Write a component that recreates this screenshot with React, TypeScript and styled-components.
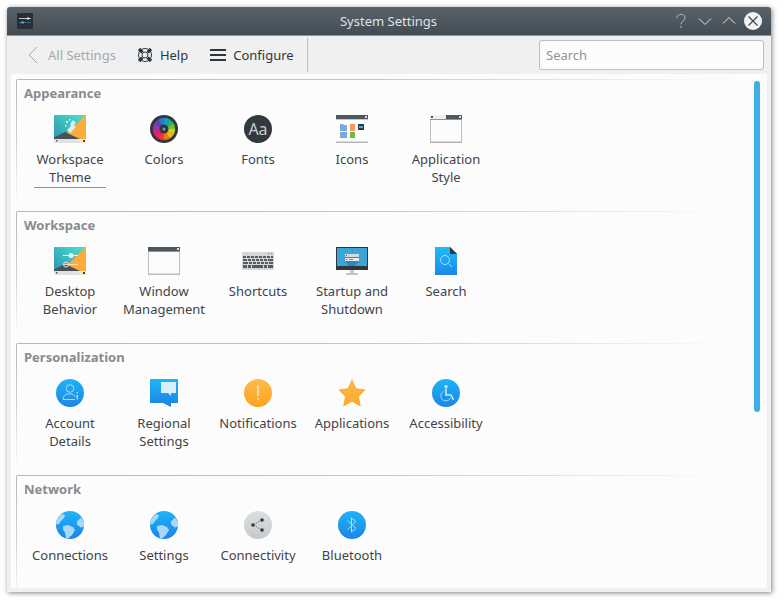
import { ReactNode } from 'react';
import styled, { createGlobalStyle } from 'styled-components';

const GlobalStyle = createGlobalStyle`
    html, body {
        margin: 0;
        padding: 0;
        background: #ffffff;
        font-family: "Noto Sans", "Liberation Sans", sans-serif;
        font-size: 13px;
    }
`;

const Page = styled.div`
    width: 784px;
    height: 605px;
    padding: 7px 13px 13px 7px;
    box-sizing: border-box;
    overflow: hidden;
`;

const Window = styled.div`
    height: 585px;
    display: flex;
    flex-direction: column;
    background: #eff0f1;
    border-radius: 3px 3px 0 0;
    box-shadow: 1px 1px 5px rgba(0, 0, 0, 0.5);
`;

const TitleBar = styled.div`
    height: 28px;
    flex: none;
    display: flex;
    align-items: center;
    padding: 0 9px 0 10px;
    background: linear-gradient(#59636b, #434c53);
    border-bottom: 1px solid #3daee9;
    border-radius: 3px 3px 0 0;
`;

const TitleSide = styled.div`
    flex: 1 1 0;
    display: flex;
    align-items: center;
`;

const Title = styled.div`
    flex: none;
    color: #dfe2e4;
    font-size: 13px;
    padding-right: 2px;
`;

const WindowButtons = styled(TitleSide)`
    justify-content: flex-end;
    gap: 6px;
`;

const Toolbar = styled.div`
    height: 38px;
    flex: none;
    display: flex;
    align-items: center;
    padding: 0 7px 0 0;
`;

const ToolButton = styled.div<{ $disabled?: boolean; $gap: number; $left: number }>`
    display: flex;
    align-items: center;
    gap: ${(p) => p.$gap}px;
    margin-left: ${(p) => p.$left}px;
    color: ${(p) => (p.$disabled ? '#a6a8aa' : '#31363b')};
`;

const ToolSeparator = styled.div`
    width: 1px;
    height: 34px;
    margin-left: 13px;
    background: #bcbec0;
`;

const SearchBox = styled.div`
    margin-left: auto;
    width: 225px;
    height: 30px;
    box-sizing: border-box;
    padding: 0 6px;
    display: flex;
    align-items: center;
    background: #fcfcfc;
    border: 1px solid #bcbec0;
    border-radius: 3px;
    color: #929496;
`;

const Content = styled.div`
    flex: 1;
    min-height: 0;
    margin: 0 4px 4px 4px;
    display: flex;
    background: #fcfcfc;
    overflow: hidden;
`;

const Groups = styled.div`
    flex: 1;
    padding: 5px 24px 0 5px;
`;

const Group = styled.section`
    height: 132px;
    padding: 6px 0 0 7px;
    box-sizing: border-box;
    background:
        linear-gradient(to right, #b4b6b8, #c4c6c8 50%, rgba(196, 198, 200, 0) 100%) top / 100% 1px no-repeat,
        linear-gradient(to bottom, #b4b6b8, #d0d2d4 50%, rgba(208, 210, 212, 0) 95%) left / 1px 100% no-repeat;
    border-top-left-radius: 2px;
`;

const GroupTitle = styled.h2`
    margin: 0 0 0 1px;
    height: 17px;
    line-height: 17px;
    font-size: 13px;
    font-weight: 700;
    color: #898b8d;
`;

const Items = styled.div`
    display: flex;
    margin-top: 11px;
`;

const Item = styled.div`
    width: 94px;
    display: flex;
    flex-direction: column;
    align-items: center;
`;

const IconBox = styled.div`
    width: 32px;
    height: 32px;
    margin-bottom: 5px;
    svg {
        display: block;
    }
`;

const Label = styled.div<{ $selected?: boolean }>`
    width: 72px;
    text-align: center;
    line-height: 18px;
    color: #3f4448;
    display: flex;
    justify-content: center;
    padding-bottom: 1px;
    border-bottom: 1px solid ${(p) => (p.$selected ? '#3daee9' : 'transparent')};
`;

const Scrollbar = styled.div`
    flex: none;
    width: 6px;
    height: 331px;
    margin: 7px 7px 0 0;
    background: #3daee9;
    border-radius: 3px;
`;

const Svg = ({ children }: { children: ReactNode }) => (
    <svg width="32" height="32" viewBox="0 0 32 32">
        {children}
    </svg>
);

const Wallpaper = ({ id, children }: { id: string; children: ReactNode }) => (
    <Svg>
        <defs>
            <linearGradient id={id} x1="0" y1="1" x2="1" y2="0">
                <stop offset="0" stopColor="#2b8fb3" />
                <stop offset="1" stopColor="#4fe3cb" />
            </linearGradient>
        </defs>
        <rect x="0" y="2" width="32" height="28" fill={`url(#${id})`} />
        <path d="M32 2V26H7z" fill="#fdab3a" />
        <path d="M0 26V24.500L11 19 26 26z" fill="#4a5257" />
        <rect x="0" y="26" width="32" height="4" fill="#dfe2e3" />
        <path d="M22 26h10v4h-4z" fill="#fbe8c8" />
        <rect x="2" y="27" width="1.400" height="1.400" fill="#444" />
        <rect x="29" y="27" width="2" height="2" fill="#444" />
        {children}
    </Svg>
);

const WorkspaceIcon = () => (
    <Wallpaper id="wp1">
        <path d="M19 7l3 3-2 2 2 2-6 6-3-3 4-4-1-2z" fill="#dfeef2" />
        <rect x="12" y="8" width="2" height="2" fill="#dfeef2" />
        <rect x="15" y="6" width="1.500" height="1.500" fill="#dfeef2" />
        <rect x="11" y="12" width="1.500" height="1.500" fill="#dfeef2" />
    </Wallpaper>
);

const DesktopIcon = () => (
    <Wallpaper id="wp2">
        <rect x="9" y="10" width="15" height="1" fill="#eef3f4" />
        <circle cx="17" cy="10.500" r="2.500" fill="#eef3f4" />
        <rect x="9" y="19" width="15" height="1" fill="#f8dfb8" />
        <circle cx="12" cy="19.500" r="2.500" fill="none" stroke="#dfe5e7" strokeWidth="1" />
    </Wallpaper>
);

const wheel = [
    '#18a0c8', '#22b07a', '#6cc02c', '#c8d020', '#f4b414', '#f47a18',
    '#f03c2c', '#e8245c', '#d0248c', '#9a34b0', '#5a44c0', '#2a78c8',
];

const wedge = (i: number) => {
    const a = ((i * 30 - 90) * Math.PI) / 180;
    const b = (((i + 1) * 30 - 90) * Math.PI) / 180;
    const p = (t: number) => `${(16 + 11 * Math.cos(t)).toFixed(2)} ${(16 + 11 * Math.sin(t)).toFixed(2)}`;
    return `M16 16L${p(a)}A11 11 0 0 1 ${p(b)}z`;
};

const ColorsIcon = () => (
    <Svg>
        <circle cx="16" cy="16" r="14" fill="#31363b" />
        {wheel.map((c, i) => (
            <path key={c} d={wedge(i)} fill={c} stroke={c} strokeWidth="0.3" />
        ))}
        <circle cx="16" cy="16" r="4.500" fill="#31363b" />
        <circle cx="16" cy="16" r="1.500" fill="#8a8f94" />
    </Svg>
);

const FontsIcon = () => (
    <Svg>
        <circle cx="16" cy="16" r="14" fill="#33383d" />
        <text x="16" y="21.500" textAnchor="middle" fontFamily="Noto Sans" fontSize="16" fill="#c9ccce">
            Aa
        </text>
    </Svg>
);

const IconsIcon = () => (
    <Svg>
        <rect x="0" y="2" width="32" height="28" fill="#fcfcfc" />
        <rect x="0" y="2" width="32" height="4" fill="#4d575f" />
        <rect x="29" y="3" width="2" height="2" fill="#dfe2e3" />
        <rect x="0" y="6" width="32" height="1" fill="#9fd3ef" />
        <rect x="0" y="28.500" width="32" height="1.500" fill="#b4b9bd" />
        <path d="M4 11h3l1 1h3v6H4z" fill="#7ba9dc" />
        <path d="M4 19h7v6H4z" fill="#7ba9dc" />
        <path d="M14 11h5v7h-5z" fill="#f59a5a" />
        <path d="M14 19h5v6h-5z" fill="#74b83c" />
        <rect x="22" y="11" width="6" height="6" fill="#31363b" />
        <rect x="23" y="13" width="4" height="2" fill="#3daee9" />
    </Svg>
);

const StyleIcon = () => (
    <Svg>
        <rect x="0" y="2" width="32" height="28" fill="#fcfcfc" />
        <rect x="0" y="2" width="32" height="4" fill="#eceef0" />
        <rect x="16" y="2" width="16" height="4" fill="#4d575f" />
        <rect x="1" y="3" width="2" height="2" fill="#4d575f" />
        <rect x="29" y="3" width="2" height="2" fill="#dfe2e3" />
        <rect x="0" y="6" width="32" height="1" fill="#3daee9" />
        <path d="M0 7h1v22H0zM31 7h1v22h-1z" fill="#bcc0c4" />
        <rect x="0" y="28.500" width="32" height="1.500" fill="#aeb3b8" />
    </Svg>
);

const WindowIcon = () => (
    <Svg>
        <rect x="0" y="2" width="32" height="28" fill="#fcfcfc" />
        <rect x="0" y="2" width="32" height="4" fill="#4d575f" />
        <rect x="29" y="3" width="2" height="2" fill="#dfe2e3" />
        <rect x="0" y="6" width="32" height="1" fill="#3daee9" />
        <path d="M0 7h1v22H0zM31 7h1v22h-1z" fill="#bcc0c4" />
        <rect x="0" y="28.500" width="32" height="1.500" fill="#b8bcc0" />
    </Svg>
);

const KeyboardIcon = () => (
    <Svg>
        <rect x="0" y="7" width="32" height="18" rx="1" fill="#d3d7d8" />
        <rect x="26" y="8" width="1.200" height="1.200" fill="#2fbf8f" />
        <rect x="29" y="8" width="1.200" height="1.200" fill="#2fbf8f" />
        <path
            d="M1 11h3v2H1zM5 11h3v2H5zM9 11h3v2H9zM13 11h3v2h-3zM17 11h3v2h-3zM21 11h3v2h-3zM25 11h3v2h-3zM29 11h2v2h-2zM1 14h4v2H1zM6 14h3v2H6zM10 14h3v2h-3zM14 14h3v2h-3zM18 14h3v2h-3zM22 14h3v2h-3zM26 14h5v2h-5zM1 17h5v2H1zM7 17h3v2H7zM11 17h3v2h-3zM15 17h3v2h-3zM19 17h3v2h-3zM23 17h3v2h-3zM27 17h4v2h-4zM1 20h4v3H1zM6 20h3v3H6zM10 20h11v3H10zM22 20h3v3h-3zM26 20h5v3h-5z"
            fill="#555c61"
        />
    </Svg>
);

const MonitorIcon = () => (
    <Svg>
        <rect x="0" y="2" width="32" height="23" fill="#31363b" />
        <rect x="1" y="3" width="30" height="18" fill="#3ba4d9" />
        <path d="M9 9h14v8l-5 4H13L9 16z" fill="#2f87b5" />
        <rect x="9" y="9" width="14" height="3" fill="#d5dadd" />
        <rect x="9" y="13" width="14" height="3" fill="#e8ebed" />
        <rect x="10" y="10" width="1" height="1" fill="#555" />
        <rect x="10" y="14" width="1" height="1" fill="#555" />
        <rect x="13" y="14" width="4" height="1" fill="#888" />
        <rect x="14" y="25" width="4" height="3" fill="#c6cacd" />
        <rect x="10" y="28" width="12" height="2" fill="#c0c4c7" />
    </Svg>
);

const SearchDocIcon = () => (
    <Svg>
        <defs>
            <linearGradient id="doc" x1="0" y1="0" x2="0" y2="1">
                <stop offset="0" stopColor="#1dbcf8" />
                <stop offset="1" stopColor="#1d88e8" />
            </linearGradient>
        </defs>
        <path d="M5 2h15l7 7v21H5z" fill="url(#doc)" />
        <path d="M20 2l7 7h-7z" fill="#31363b" />
        <circle cx="15" cy="15" r="4.500" fill="none" stroke="#a8def8" strokeWidth="1" />
        <path d="M18.500 18.500L22 22" stroke="#a8def8" strokeWidth="1" />
    </Svg>
);

const BlueDisc = ({ id, children }: { id: string; children?: ReactNode }) => (
    <Svg>
        <defs>
            <linearGradient id={id} x1="0" y1="0" x2="0" y2="1">
                <stop offset="0" stopColor="#1fb4f5" />
                <stop offset="1" stopColor="#1d84e6" />
            </linearGradient>
        </defs>
        <circle cx="16" cy="16" r="14" fill={`url(#${id})`} />
        {children}
    </Svg>
);

const AccountIcon = () => (
    <BlueDisc id="acc">
        <circle cx="16" cy="11.500" r="3.800" fill="none" stroke="#a9dcf8" strokeWidth="1" />
        <path d="M9 22.500c0-3.500 2-5 4.500-5.500h4c2 .5 3 1.500 3.500 3M9 22.500h12" fill="none" stroke="#a9dcf8" strokeWidth="1" />
        <rect x="22.500" y="18" width="1.500" height="4.500" fill="#a9dcf8" />
        <rect x="22.500" y="15" width="1.500" height="1.500" fill="#a9dcf8" />
    </BlueDisc>
);

const RegionalIcon = () => (
    <Svg>
        <defs>
            <linearGradient id="reg" x1="0" y1="0" x2="0" y2="1">
                <stop offset="0" stopColor="#1fb6f6" />
                <stop offset="1" stopColor="#1d80e4" />
            </linearGradient>
        </defs>
        <path d="M2 2h28v24h-7v4l-8-4H2z" fill="url(#reg)" />
        <path d="M13 5h15v11h-5v3l-3-3h-7z" fill="#d8eefb" />
    </Svg>
);

const NotificationIcon = () => (
    <Svg>
        <defs>
            <linearGradient id="not" x1="0" y1="0" x2="0" y2="1">
                <stop offset="0" stopColor="#fdbc4b" />
                <stop offset="1" stopColor="#fca21f" />
            </linearGradient>
        </defs>
        <circle cx="16" cy="16" r="14" fill="url(#not)" />
        <rect x="15.300" y="8" width="1.500" height="11" fill="#fde6bf" />
        <rect x="15.300" y="21" width="1.500" height="2" fill="#fde6bf" />
    </Svg>
);

const StarIcon = () => (
    <Svg>
        <defs>
            <linearGradient id="star" x1="0" y1="0" x2="0" y2="1">
                <stop offset="0" stopColor="#fdbc4b" />
                <stop offset="1" stopColor="#fca628" />
            </linearGradient>
        </defs>
        <path d="M16 2l4.400 9.200 9.600 1.300-7 6.900 1.700 10.200L16 24.800l-8.700 4.800L9 19.400l-7-6.900 9.600-1.300z" fill="url(#star)" />
    </Svg>
);

const AccessibilityIcon = () => (
    <BlueDisc id="axs">
        <circle cx="16" cy="9.500" r="1.600" fill="#d5effc" />
        <path d="M16 11.500v6.500h5l2.500 5" fill="none" stroke="#d5effc" strokeWidth="1.500" />
        <path d="M13.500 14.500a5 5 0 1 0 7 6" fill="none" stroke="#a9dcf8" strokeWidth="1" />
    </BlueDisc>
);

const GlobeIcon = ({ id }: { id: string }) => (
    <BlueDisc id={id}>
        <path
            d="M8 5l3 1-1 3-3 3-2 3-3 .5c0-4 2-7.500 6-10.500zM9 17l5-1 5 2 2 3-3 5-4 3.500-2 0-1-6-2-3zM27 8.500l3 5v4l-3 1-4-3v-3z"
            fill="#a8d8f8"
        />
    </BlueDisc>
);

const ConnectivityIcon = () => (
    <Svg>
        <defs>
            <linearGradient id="con" x1="0" y1="0" x2="0" y2="1">
                <stop offset="0" stopColor="#dcdfe0" />
                <stop offset="1" stopColor="#c6cacc" />
            </linearGradient>
        </defs>
        <circle cx="16" cy="16" r="14" fill="url(#con)" />
        <path d="M11 16l9-5M11 16l9 5" stroke="#6a7075" strokeWidth="1" strokeDasharray="1.500 1.500" />
        <circle cx="11" cy="16" r="1.800" fill="#31363b" />
        <circle cx="20" cy="11" r="1.800" fill="#31363b" />
        <circle cx="20" cy="21" r="1.800" fill="#31363b" />
    </Svg>
);

const BluetoothIcon = () => (
    <BlueDisc id="blt">
        <path d="M11.500 11.500l8.500 8-4.500 3.500V9l4.500 3.500-8.500 8" fill="none" stroke="#a8dcf8" strokeWidth="1" />
    </BlueDisc>
);

const LifebuoyIcon = () => (
    <svg width="16" height="16" viewBox="0 0 16 16">
        <circle cx="8" cy="8" r="6.500" fill="#eff0f1" stroke="#31363b" strokeWidth="1" />
        <path d="M2 2l3.400 3.400M14 2l-3.400 3.400M2 14l3.400-3.400M14 14l-3.400-3.400" stroke="#31363b" strokeWidth="3.400" />
        <circle cx="8" cy="8" r="3" fill="#eff0f1" stroke="#31363b" strokeWidth="1" />
    </svg>
);

const sections = [
    {
        title: 'Appearance',
        items: [
            { label: 'Workspace Theme', icon: <WorkspaceIcon />, selected: true },
            { label: 'Colors', icon: <ColorsIcon /> },
            { label: 'Fonts', icon: <FontsIcon /> },
            { label: 'Icons', icon: <IconsIcon /> },
            { label: 'Application Style', icon: <StyleIcon /> },
        ],
    },
    {
        title: 'Workspace',
        items: [
            { label: 'Desktop Behavior', icon: <DesktopIcon /> },
            { label: 'Window Management', icon: <WindowIcon /> },
            { label: 'Shortcuts', icon: <KeyboardIcon /> },
            { label: 'Startup and Shutdown', icon: <MonitorIcon /> },
            { label: 'Search', icon: <SearchDocIcon /> },
        ],
    },
    {
        title: 'Personalization',
        items: [
            { label: 'Account Details', icon: <AccountIcon /> },
            { label: 'Regional Settings', icon: <RegionalIcon /> },
            { label: 'Notifications', icon: <NotificationIcon /> },
            { label: 'Applications', icon: <StarIcon /> },
            { label: 'Accessibility', icon: <AccessibilityIcon /> },
        ],
    },
    {
        title: 'Network',
        items: [
            { label: 'Connections', icon: <GlobeIcon id="globe1" /> },
            { label: 'Settings', icon: <GlobeIcon id="globe2" /> },
            { label: 'Connectivity', icon: <ConnectivityIcon /> },
            { label: 'Bluetooth', icon: <BluetoothIcon /> },
        ],
    },
];

const App = () => (
    <Page>
        <GlobalStyle />
        <Window>
            <TitleBar>
                <TitleSide>
                    <svg width="16" height="16" viewBox="0 0 16 16">
                        <rect width="16" height="16" rx="1" fill="#2a2e32" />
                        <rect x="2" y="5" width="12" height="1" fill="#b8c0c6" />
                        <rect x="10" y="4.500" width="2" height="2" fill="#e8eaec" />
                        <rect x="2" y="9" width="12" height="1" fill="#2c6f94" />
                        <rect x="4" y="8.500" width="3" height="2" fill="#3daee9" />
                    </svg>
                </TitleSide>
                <Title>System Settings</Title>
                <WindowButtons>
                    <svg width="18" height="18" viewBox="0 0 18 18" fill="none" stroke="#b4b9bd" strokeWidth="1">
                        <path d="M5 6c0-5 8-5 8 0 0 3-4 3-4 6.500" />
                        <path d="M9 14v2" />
                    </svg>
                    <svg width="18" height="18" viewBox="0 0 18 18" fill="none" stroke="#e3e5e7" strokeWidth="1">
                        <path d="M3 6.500l6 6 6-6" />
                    </svg>
                    <svg width="18" height="18" viewBox="0 0 18 18" fill="none" stroke="#e3e5e7" strokeWidth="1">
                        <path d="M3 11.500l6-6 6 6" />
                    </svg>
                    <svg width="18" height="18" viewBox="0 0 18 18">
                        <circle cx="9" cy="9" r="9" fill="#f2f3f4" />
                        <path d="M4.500 4.500l9 9M13.500 4.500l-9 9" stroke="#3d454b" strokeWidth="1.200" />
                    </svg>
                </WindowButtons>
            </TitleBar>
            <Toolbar>
                <ToolButton $disabled $gap={10} $left={20}>
                    <svg width="11" height="18" viewBox="0 0 11 18" fill="none" stroke="#a6a8aa" strokeWidth="1">
                        <path d="M10 1L2 9l8 8" />
                    </svg>
                    All Settings
                </ToolButton>
                <ToolButton $gap={7} $left={21}>
                    <LifebuoyIcon />
                    Help
                </ToolButton>
                <ToolButton $gap={7} $left={22}>
                    <svg width="16" height="14" viewBox="0 0 16 14" fill="#31363b">
                        <rect y="1" width="16" height="2" />
                        <rect y="6" width="16" height="2" />
                        <rect y="11" width="16" height="2" />
                    </svg>
                    Configure
                </ToolButton>
                <ToolSeparator />
                <SearchBox>Search</SearchBox>
            </Toolbar>
            <Content>
                <Groups>
                    {sections.map((section) => (
                        <Group key={section.title}>
                            <GroupTitle>{section.title}</GroupTitle>
                            <Items>
                                {section.items.map((item) => (
                                    <Item key={item.label}>
                                        <IconBox>{item.icon}</IconBox>
                                        <Label $selected={item.selected}>{item.label}</Label>
                                    </Item>
                                ))}
                            </Items>
                        </Group>
                    ))}
                </Groups>
                <Scrollbar />
            </Content>
        </Window>
    </Page>
);

export default App;
